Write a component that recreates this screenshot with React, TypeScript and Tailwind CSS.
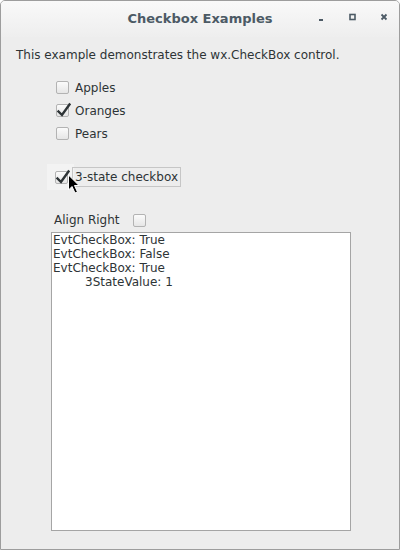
const font = "font-['DejaVu_Sans',sans-serif]";

function Box({ checked = false }: { checked?: boolean }) {
  return (
    <span className="relative flex h-[13px] w-[13px] shrink-0 rounded-[2px] border border-[#b3b3b3] bg-gradient-to-b from-[#fbfbfb] to-[#e6e6e6]">
      {checked && (
        <svg className="absolute -left-[1px] -top-[3px]" width="16" height="16" viewBox="0 0 16 16">
          <path d="M2.5 9.5 L6 13 L13.5 2.5" fill="none" stroke="#2e3436" strokeWidth="2.4" strokeLinecap="square" />
        </svg>
      )}
    </span>
  );
}

function Row({ label, checked }: { label: string; checked?: boolean }) {
  return (
    <div className="flex h-[23px] items-center gap-[6px] pl-[55px]">
      <Box checked={checked} />
      <span>{label}</span>
    </div>
  );
}

export default function App() {
  return (
    <div className={`${font} h-[550px] w-[400px] text-[12px] leading-[14px] text-[#2e3436]`}>
      <div className="flex h-full flex-col overflow-hidden rounded-t-[5px] border border-[#9d9d9d] bg-[#ededed]">
        {/* title bar */}
        <div className="relative flex h-[36px] shrink-0 items-center justify-center bg-gradient-to-b from-[#f9f9f9] to-[#eeeeee]">
          <span className="text-[13px] font-bold text-[#4c5a65]">Checkbox Examples</span>
          <div className="absolute right-0 top-0 flex h-full items-center">
            <svg className="absolute left-[-83px] top-[12px]" width="10" height="10" viewBox="0 0 10 10">
              <rect x="3" y="6" width="4" height="2" fill="#4c5a65" />
            </svg>
            <svg className="absolute left-[-51px] top-[12px]" width="10" height="10" viewBox="0 0 10 10">
              <rect x="2" y="1.5" width="5" height="5" fill="none" stroke="#4c5a65" strokeWidth="1.6" />
            </svg>
            <svg className="absolute left-[-19px] top-[12px]" width="10" height="10" viewBox="0 0 10 10">
              <path d="M1.5 1.5 L6.5 6.5 M6.5 1.5 L1.5 6.5" stroke="#4c5a65" strokeWidth="1.8" />
            </svg>
          </div>
        </div>

        {/* body */}
        <div className="flex flex-1 flex-col">
          <p className="pl-[15px] pt-[11px]">This example demonstrates the wx.CheckBox control.</p>

          <div className="mt-[14px] flex flex-col">
            <Row label="Apples" />
            <Row label="Oranges" checked />
            <Row label="Pears" />
          </div>

          <div className="relative mt-[19px] ml-[46px] flex h-[26px] w-[30px] items-center">
            <div className="flex h-[26px] items-center bg-[#f3f3f3] pl-[8px] pr-[6px]">
              <Box checked />
            </div>
            <span className="ml-[-2px] whitespace-nowrap border border-[#c6c6c6] px-[2px] py-[2px]">3-state checkbox</span>
            <svg className="absolute left-[20px] top-[10px]" width="14" height="22" viewBox="0 0 14 22">
              <path d="M1.5 1 L1.5 16 L5 12.5 L8 19 L10.5 18 L7.5 11.5 L12 11.5 Z" fill="#000" stroke="#fff" strokeWidth="1" strokeLinejoin="round" />
            </svg>
          </div>

          <div className="mt-[23px] flex items-center gap-[13px] pl-[53px]">
            <span>Align Right</span>
            <Box />
          </div>

          <div className="mb-[18px] ml-[50px] mt-[5px] w-[300px] flex-1 border border-[#a5a5a5] bg-white pl-[1px]">
            <div>EvtCheckBox: True</div>
            <div>EvtCheckBox: False</div>
            <div>EvtCheckBox: True</div>
            <div className="pl-[32px]">3StateValue: 1</div>
          </div>
        </div>
      </div>
    </div>
  );
}
